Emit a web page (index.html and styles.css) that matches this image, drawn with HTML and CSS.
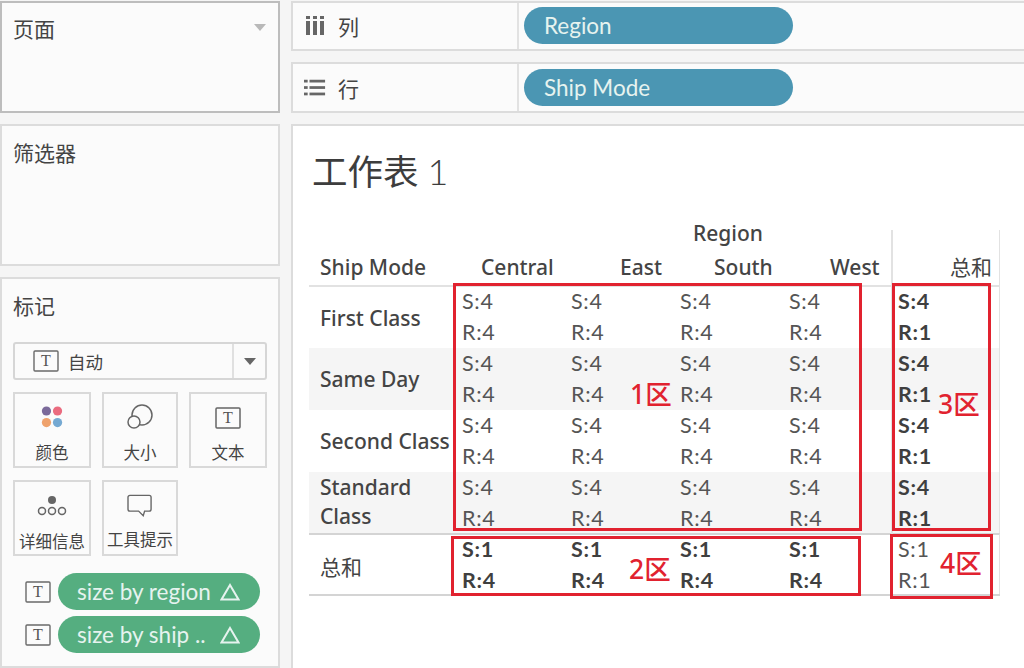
FILE: index.html
```html
<!DOCTYPE html>
<html lang="zh">
<head>
<meta charset="utf-8">
<title>工作表 1</title>
<link rel="stylesheet" href="styles.css">
</head>
<body>
<div class="app">
  <aside class="side">
    <section class="panel pages"><h2>页面</h2><span class="caret"></span></section>
    <section class="panel filters"><h2>筛选器</h2></section>
    <section class="panel marks">
      <h2>标记</h2>
      <div class="select">
        <svg class="t-icon" viewBox="0 0 26 22"><rect x="1" y="1" width="24" height="20" rx="1"/><text x="13" y="16" text-anchor="middle">T</text></svg>
        <span class="select-label">自动</span>
        <span class="select-btn"><i></i></span>
      </div>
      <div class="cards">
        <div class="card c1">
          <svg class="ci" viewBox="0 0 26 26"><circle cx="7" cy="6.500" r="5" fill="#7b6a9a"/><circle cx="19" cy="6.500" r="5" fill="#ea6b7f"/><circle cx="7" cy="19" r="5" fill="#efa26c"/><circle cx="19" cy="19" r="5" fill="#75a9d2"/></svg>
          <span>颜色</span></div>
        <div class="card c2">
          <svg class="ci" viewBox="0 0 28 26"><circle cx="16" cy="11" r="10" class="ln"/><circle cx="8" cy="18" r="6" class="ln wh"/></svg>
          <span>大小</span></div>
        <div class="card c3">
          <svg class="ci ci-t" viewBox="0 0 26 22"><rect x="1" y="1" width="24" height="20" rx="1" class="ln"/><text x="13" y="16" text-anchor="middle">T</text></svg>
          <span>文本</span></div>
        <div class="card c1 r2">
          <svg class="ci ci-d" viewBox="0 0 30 22"><circle cx="15" cy="5" r="4" fill="#666"/><circle cx="5" cy="16" r="3.500" class="ln"/><circle cx="15" cy="16" r="3.500" class="ln"/><circle cx="25" cy="16" r="3.500" class="ln"/></svg>
          <span>详细信息</span></div>
        <div class="card c2 r2">
          <svg class="ci ci-b" viewBox="0 0 28 26"><path d="M3 1.500h21a2 2 0 0 1 2 2v13a2 2 0 0 1-2 2h-5l-1.500 5-5-5H3a2 2 0 0 1-2-2v-13a2 2 0 0 1 2-2z" class="ln"/></svg>
          <span>工具提示</span></div>
      </div>
      <div class="mark-row">
        <svg class="t-icon small" viewBox="0 0 26 22"><rect x="1" y="1" width="24" height="20" rx="1"/><text x="13" y="16" text-anchor="middle">T</text></svg>
        <div class="pill green"><span>size by region</span><svg class="delta" viewBox="0 0 20 18"><path d="M10 2 18.500 16.500H1.500Z"/></svg></div>
      </div>
      <div class="mark-row">
        <svg class="t-icon small" viewBox="0 0 26 22"><rect x="1" y="1" width="24" height="20" rx="1"/><text x="13" y="16" text-anchor="middle">T</text></svg>
        <div class="pill green"><span>size by ship ..</span><svg class="delta" viewBox="0 0 20 18"><path d="M10 2 18.500 16.500H1.500Z"/></svg></div>
      </div>
    </section>
  </aside>
  <main class="main">
    <div class="shelf">
      <div class="shelf-label">
        <svg class="shelf-icon" viewBox="0 0 20 20"><rect x="1" y="0" width="4" height="3" /><rect x="1" y="5" width="4" height="14"/><rect x="8" y="0" width="4" height="3"/><rect x="8" y="5" width="4" height="14"/><rect x="15" y="0" width="4" height="3"/><rect x="15" y="5" width="4" height="14"/></svg>
        <span>列</span></div>
      <div class="shelf-body"><div class="pill blue">Region</div></div>
    </div>
    <div class="shelf">
      <div class="shelf-label">
        <svg class="shelf-icon" viewBox="0 0 24 20"><rect x="0" y="1" width="4" height="3"/><rect x="6" y="1" width="17" height="3"/><rect x="0" y="8" width="4" height="3"/><rect x="6" y="8" width="17" height="3"/><rect x="0" y="15" width="4" height="3"/><rect x="6" y="15" width="17" height="3"/></svg>
        <span>行</span></div>
      <div class="shelf-body"><div class="pill blue">Ship Mode</div></div>
    </div>
    <section class="sheet">
      <h1>工作表 <em>1</em></h1>
      <div class="viz">
        <div class="table">
          <div class="h-region"><div>Region</div></div>
          <div class="head">
            <div class="hc first">Ship Mode</div>
            <div class="hc col">Central</div>
            <div class="hc col east">East</div>
            <div class="hc col south">South</div>
            <div class="hc col west">West</div>
            <div class="hc total">总和</div>
          </div>
          <div class="row top">
            <div class="rh">First Class</div>
            <div class="cell"><p>S:4</p><p>R:4</p></div><div class="cell"><p>S:4</p><p>R:4</p></div><div class="cell"><p>S:4</p><p>R:4</p></div><div class="cell"><p>S:4</p><p>R:4</p></div>
            <div class="cell tot strong"><p>S:4</p><p>R:1</p></div>
          </div>
          <div class="row alt">
            <div class="rh">Same Day</div>
            <div class="cell"><p>S:4</p><p>R:4</p></div><div class="cell"><p>S:4</p><p>R:4</p></div><div class="cell"><p>S:4</p><p>R:4</p></div><div class="cell"><p>S:4</p><p>R:4</p></div>
            <div class="cell tot strong"><p>S:4</p><p>R:1</p></div>
          </div>
          <div class="row">
            <div class="rh">Second Class</div>
            <div class="cell"><p>S:4</p><p>R:4</p></div><div class="cell"><p>S:4</p><p>R:4</p></div><div class="cell"><p>S:4</p><p>R:4</p></div><div class="cell"><p>S:4</p><p>R:4</p></div>
            <div class="cell tot strong"><p>S:4</p><p>R:1</p></div>
          </div>
          <div class="row alt">
            <div class="rh two">Standard<br>Class</div>
            <div class="cell"><p>S:4</p><p>R:4</p></div><div class="cell"><p>S:4</p><p>R:4</p></div><div class="cell"><p>S:4</p><p>R:4</p></div><div class="cell"><p>S:4</p><p>R:4</p></div>
            <div class="cell tot strong"><p>S:4</p><p>R:1</p></div>
          </div>
          <div class="row sum">
            <div class="rh">总和</div>
            <div class="cell strong"><p>S:1</p><p>R:4</p></div><div class="cell strong"><p>S:1</p><p>R:4</p></div><div class="cell strong"><p>S:1</p><p>R:4</p></div><div class="cell strong"><p>S:1</p><p>R:4</p></div>
            <div class="cell tot"><p>S:1</p><p>R:1</p></div>
          </div>
        </div>
        <div class="zone z1"></div>
        <div class="zone z2"></div>
        <div class="zone z3"></div>
        <div class="zone z4"></div>
        <span class="tag t1">1区</span>
        <span class="tag t2">2区</span>
        <span class="tag t3">3区</span>
        <span class="tag t4">4区</span>
      </div>
    </section>
  </main>
</div>
</body>
</html>
```
FILE: styles.css
```css
* { box-sizing: border-box; }
html, body { margin: 0; height: 100%; overflow: hidden; }
body { background: #f5f5f5; color: #3f3f3f; font-family: "Noto Sans", "Noto Sans CJK SC", sans-serif; }
.app { display: flex; gap: 11px; height: 668px; padding-top: 1px; }
.side { width: 280px; flex: none; display: flex; flex-direction: column; gap: 11px; }
.panel { background: #fbfbfb; border: 2px solid #dcdcdc; position: relative; padding: 12px 11px 0; }
.panel h2 { margin: 0; font: 400 21px/28px "Noto Sans CJK SC", sans-serif; color: #444; }
.pages { height: 112px; border-color: #bdbdbd; padding-top: 11px; }
.caret { position: absolute; right: 12px; top: 21px; border: 6px solid transparent; border-top: 7px solid #b9b9b9; border-bottom: 0; }
.filters { height: 142px; }
.marks { flex: 1; }
.select { margin-top: 23px; height: 38px; width: 254px; border: 2px solid #d6d6d6; border-radius: 3px; background: #fbfbfb; display: flex; align-items: center; padding-left: 18px; }
.t-icon { width: 26px; height: 22px; flex: none; }
.t-icon rect { fill: none; stroke: #6a6a6a; stroke-width: 1.400; }
.t-icon text, .ci text { font: 400 16px "Liberation Serif", serif; fill: #555; }
.select-label { margin-left: 9px; font: 400 17.500px "Noto Sans CJK SC", sans-serif; color: #444; flex: 1; }
.select-btn { width: 33px; height: 100%; border-left: 2px solid #e0e0e0; display: flex; align-items: center; justify-content: center; }
.select-btn i { border: 6px solid transparent; border-top: 7px solid #666; border-bottom: 0; }
.cards { display: grid; grid-template-columns: 78px 76px 78px; column-gap: 11px; row-gap: 12px; margin-top: 12px; width: 254px; }
.card { height: 76px; border: 2px solid #d9d9d9; background: #fbfbfb; display: flex; flex-direction: column; align-items: center; font: 400 16.500px/20px "Noto Sans CJK SC", sans-serif; color: #444; padding-top: 11px; }
.card span { white-space: nowrap; }
.ci { width: 24px; height: 24px; margin-bottom: 13px; flex: none; }
.c2 .ci { width: 28px; height: 26px; margin-top: -1px; margin-bottom: 12px; }
.c3 .ci { width: 26px; height: 22px; margin-top: 2px; margin-bottom: 13px; }
.ci-d { width: 30px; height: 22px; margin-bottom: 14px; margin-top: 2px; }
.r2 .ci.ci-b { width: 26px; height: 24px; margin-top: 1px; margin-bottom: 11px; }
.ln { fill: none; stroke: #666; stroke-width: 1.500; }
.wh { fill: #fbfbfb; }
.mark-row { display: flex; align-items: center; margin-top: 6px; padding-left: 12px; width: 254px; }
.cards + .mark-row { margin-top: 17px; }
.t-icon.small { margin-right: 7px; }
.pill { border-radius: 19px; height: 37px; color: #e6f3ef; font: 400 22.500px/37px Lato, "Noto Sans", sans-serif; }
.pill.green { background: #55ae80; width: 202px; display: flex; justify-content: space-between; align-items: center; padding: 0 20px 0 19px; }
.delta { width: 20px; height: 18px; fill: none; stroke: #e6f3ef; stroke-width: 2; }
.pill.blue { background: #4b96b3; width: 269px; padding-left: 20px; margin-top: -1px; }
.main { flex: 1; display: flex; flex-direction: column; gap: 11px; min-width: 0; }
.shelf { height: 50px; display: flex; border: 2px solid #dcdcdc; border-right: 0; background: #fbfbfb; flex: none; }
.shelf-label { width: 226px; flex: none; border-right: 2px solid #e2e2e2; display: flex; align-items: center; padding-left: 11px; font: 400 21px "Noto Sans CJK SC", sans-serif; color: #444; }
.shelf-icon { width: 22px; height: 20px; fill: #666; margin-right: 12px; }
.shelf-body { display: flex; align-items: center; padding-left: 5px; flex: 1; }
.shelf:nth-child(2) { height: 51px; }
.sheet { flex: 1; background: #fff; border: 2px solid #dcdcdc; border-right: 0; border-bottom: 0; padding: 0 0 0 16px; position: relative; }
.sheet h1 { margin: 0; padding: 16px 0 0 3px; height: 92px; font: 400 35.500px/56px "Noto Sans CJK SC", sans-serif; color: #3d3d3d; }
.sheet h1 em { font: 300 36px/56px Lato, sans-serif; margin-left: 1px; }
.viz { position: relative; }
.table { width: 691px; border-bottom: 2px solid #d4d4d4; position: relative; font: 500 21px/30px "Noto Sans", sans-serif; color: #444; }
.h-region { height: 32px; padding-left: 384px; line-height: 30px; }
.head { display: grid; grid-template-columns: 144px 109px 109px 109px 111px 1fr; height: 37px; border-bottom: 2px solid #e2e2e2; line-height: 34px; }
.hc { white-space: nowrap; }
.first { padding-left: 11px; }
.col { padding-left: 28px; }
.east { padding-left: 58px; }
.south { padding-left: 43px; }
.west { padding-left: 50px; }
.total { border-left: 2px solid #e2e2e2; border-right: 1px solid #e2e2e2; margin-top: -20px; padding: 19px 7px 0 0; text-align: right; font-family: "Noto Sans CJK SC", sans-serif; font-weight: 400; }
.row { display: grid; grid-template-columns: 144px 109px 109px 109px 111px 1fr; height: 62px; border-right: 1px solid #e2e2e2; }
.top { height: 61px; }
.top .cell { margin-top: -1px; }
.alt { background: #f5f5f5; }
.sum { border-top: 2px solid #d4d4d4; height: 61px; margin-top: -1px; }
.sum .cell { margin-top: -1px; }
.rh { padding-left: 11px; align-self: center; white-space: nowrap; }
.rh.two { line-height: 29px; position: relative; top: -1px; }
.sum .rh { font-family: "Noto Sans CJK SC", sans-serif; font-weight: 400; }
.cell { padding-left: 9px; font: 400 21.500px/31px Lato, sans-serif; letter-spacing: .7px; color: #555; }
.cell p { margin: 0; }
.strong { font-weight: 700; color: #3f3f3f; }
.tot { padding-left: 5px; border-left: 2px solid #e2e2e2; }
.zone { position: absolute; border: 3.500px solid #e1222f; }
.z1 { left: 144px; top: 65px; width: 409px; height: 248px; }
.z2 { left: 142px; top: 318px; width: 410px; height: 60px; }
.z3 { left: 583px; top: 65px; width: 99px; height: 248px; }
.z4 { left: 581px; top: 316px; width: 103px; height: 65px; }
.tag { position: absolute; color: #e1222f; font: 500 26.500px/30px "Noto Sans", "Noto Sans CJK SC", sans-serif; white-space: nowrap; }
.t1 { left: 321px; top: 161px; }
.t2 { left: 320px; top: 336px; }
.t3 { left: 629px; top: 171px; }
.t4 { left: 631px; top: 330px; }
```
